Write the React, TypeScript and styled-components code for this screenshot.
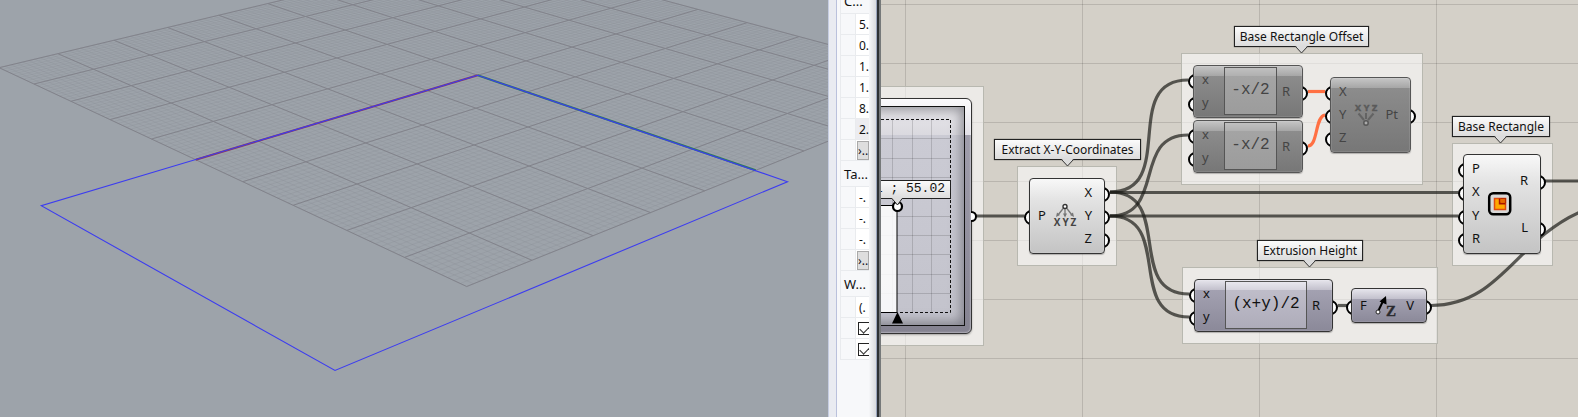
import React from 'react';
import styled, { createGlobalStyle, css } from 'styled-components';

const GlobalStyle = createGlobalStyle`
  * { box-sizing: border-box; }
  html, body { margin: 0; padding: 0; }
  body { font-family: 'Noto Sans', 'Open Sans', sans-serif; color: #111; }
`;

const Workspace = styled.main`
  display: grid;
  grid-template-columns: minmax(0, 828fr) 53px minmax(0, 697fr);
  height: 100vh;
  overflow: hidden;
`;

/* ---------- Perspective viewport ---------- */

const Viewport = styled.section`
  background: #9da3aa;
  min-width: 0;
  overflow: hidden;
`;

const Scene = styled.svg`
  display: block;
  width: 100%;
  height: 100%;
`;

type Pt = [number, number];

const CORNER: Pt = [466.7, 286.5];
const X_END: Pt = [195.7, 159.7];
const ORIGIN: Pt = [477.7, 75.3];
const Y_END: Pt = [755.7, 170.3];

/* Projects ground-plane coordinates (grid cells counted from the near corner). */
const project = (() => {
  const d1 = [X_END[0] - ORIGIN[0], X_END[1] - ORIGIN[1]];
  const d2 = [Y_END[0] - ORIGIN[0], Y_END[1] - ORIGIN[1]];
  const d3 = [
    CORNER[0] - X_END[0] + ORIGIN[0] - Y_END[0],
    CORNER[1] - X_END[1] + ORIGIN[1] - Y_END[1],
  ];
  const den = d1[0] * d2[1] - d2[0] * d1[1];
  const g = (d3[0] * d2[1] - d2[0] * d3[1]) / den;
  const h = (d1[0] * d3[1] - d3[0] * d1[1]) / den;
  return (a: number, b: number): Pt => {
    const u = a / 5;
    const v = b / 5;
    const w = 1 + g * u + h * v;
    return [0, 1].map(
      (i) =>
        (CORNER[i] +
          u * (X_END[i] - CORNER[i] + g * X_END[i]) +
          v * (Y_END[i] - CORNER[i] + h * Y_END[i])) /
        w
    ) as Pt;
  };
})();

const segment = (p: Pt, q: Pt) =>
  `M${p[0].toFixed(1)} ${p[1].toFixed(1)}L${q[0].toFixed(1)} ${q[1].toFixed(1)}`;

const gridPath = (count: number) =>
  Array.from({ length: count + 1 }, (_, i) => {
    const k = (i * 10) / count;
    return segment(project(k, 0), project(k, 10)) + segment(project(0, k), project(10, k));
  }).join('');

const MAJOR = gridPath(10);
const MINOR = gridPath(100);

const GroundPlane = () => (
  <Scene role="img" aria-label="Perspective view">
    <path d={MINOR} stroke="#868b93" strokeOpacity="0.26" strokeWidth="1" fill="none" />
    <path d={MAJOR} stroke="#82838b" strokeWidth="1" fill="none" />
    <path d={segment(ORIGIN, X_END)} stroke="#8d3a5c" strokeWidth="2" />
    <path d={segment(ORIGIN, Y_END)} stroke="#2f7d5c" strokeWidth="2" />
    <path
      d="M477.7 75.3L41.3 205.7L335 370.5L787.5 181.7Z"
      stroke="#3c3cf0"
      strokeWidth="1.100"
      fill="none"
    />
  </Scene>
);

/* ---------- Property panel ---------- */

const Panel = styled.aside`
  display: flex;
  background: #f7f8fa;
  border-left: 1px solid #c6cde2;
  overflow: hidden;
`;

const Splitter = styled.div`
  flex: 0 0 8px;
  background: #e9ebf1;
  border-right: 1px solid #bac1dc;
`;

const PanelBody = styled.div`
  flex: 0 0 32px;
  padding-left: 3px;
  overflow: hidden;
`;

const PanelShadow = styled.div`
  flex: 1;
  background: linear-gradient(90deg, #f6f7f9, #d9dbde);
  border-right: 1px solid #9aa5bd;
`;

const WindowEdge = styled.div`
  flex: 0 0 4px;
  background: #2d3134;
  border-right: 2px solid #76797a;
`;

const PropertyTable = styled.table`
  width: 29px;
  margin-top: -13px;
  table-layout: fixed;
  border-collapse: collapse;
  font-size: 12px;
  line-height: 18px;
`;

const SectionHead = styled.th`
  height: 26px;
  padding: 0 0 0 3px;
  border: 1px solid #e9ebee;
  border-right: 0;
  font-size: 13px;
  font-weight: 400;
  text-align: left;
  white-space: nowrap;
`;

const Gutter = styled.td`
  height: 21px;
  padding: 0;
  border: 1px solid #e9ebee;
`;

const Value = styled.td<{ $shaded?: boolean }>`
  height: 21px;
  padding: 1px 0 0 3px;
  background: ${(p) => (p.$shaded ? '#ececf0' : '#fff')};
  border: 1px solid #e9ebee;
  border-right: 0;
  white-space: nowrap;
`;

const MoreButton = styled.button`
  display: block;
  width: 12px;
  height: 19px;
  margin-left: -2px;
  padding: 0;
  border: 1px solid #a9a9a9;
  background: #dedede;
  font: inherit;
  line-height: 16px;
  color: #112;
  text-align: left;
`;

const Check = styled.input`
  appearance: none;
  display: block;
  width: 13px;
  height: 13px;
  margin: 0 0 0 -1px;
  border: 1px solid #222;
  background: #fff;
  &:checked::after {
    content: '';
    display: block;
    width: 9px;
    height: 5px;
    margin: 2px 0 0 1px;
    border: solid #333;
    border-width: 0 0 1px 1px;
    transform: rotate(-45deg);
  }
`;

type Row = { kind: 'value' | 'shaded' | 'more' | 'check'; text: string };

const v = (text: string): Row => ({ kind: 'value', text });

const SECTIONS: { title: string; rows: Row[] }[] = [
  {
    title: 'C...',
    rows: [
      v('5.'),
      v('0.'),
      v('1.'),
      v('1.'),
      v('8.'),
      { kind: 'shaded', text: '2.' },
      { kind: 'more', text: '›..' },
    ],
  },
  { title: 'Ta...', rows: [v('-.'), v('-.'), v('-.'), { kind: 'more', text: '›..' }] },
  {
    title: 'W...',
    rows: [v('(.'), { kind: 'check', text: 'Show' }, { kind: 'check', text: 'Visible' }],
  },
];

const PropertyRow = ({ row }: { row: Row }) => (
  <tr>
    <Gutter />
    <Value $shaded={row.kind === 'shaded'}>
      {row.kind === 'more' && <MoreButton>{row.text}</MoreButton>}
      {row.kind === 'check' && <Check type="checkbox" defaultChecked aria-label={row.text} />}
      {(row.kind === 'value' || row.kind === 'shaded') && row.text}
    </Value>
  </tr>
);

const GutterCol = styled.col`
  width: 15px;
`;

const Properties = () => (
  <Panel>
    <Splitter />
    <PanelBody>
      <PropertyTable>
        <colgroup>
          <GutterCol />
          <col />
        </colgroup>
        {SECTIONS.map((s) => (
          <tbody key={s.title}>
            <tr>
              <SectionHead colSpan={2}>{s.title}</SectionHead>
            </tr>
            {s.rows.map((r, i) => (
              <PropertyRow key={i} row={r} />
            ))}
          </tbody>
        ))}
      </PropertyTable>
    </PanelBody>
    <PanelShadow />
    <WindowEdge />
  </Panel>
);

/* ---------- Node canvas ---------- */

const Canvas = styled.section`
  position: relative;
  min-width: 0;
  overflow: hidden;
  background: #d4d0c8;
`;

const CanvasLayer = styled.svg`
  position: absolute;
  inset: 0;
  width: 100%;
  height: 100%;
`;

type Box = { $x: number; $y: number; $w: number; $h: number };

const placed = css<Box>`
  position: absolute;
  left: ${(p) => p.$x}px;
  top: ${(p) => p.$y}px;
  width: ${(p) => p.$w}px;
  height: ${(p) => p.$h}px;
`;

const Group = styled.div<Box>`
  ${placed}
  background: rgba(255, 255, 255, 0.56);
  border: 1px solid #b8b8b0;
`;

const Tag = styled.div<{ $x: number; $y: number; $w: number }>`
  position: absolute;
  left: ${(p) => p.$x}px;
  top: ${(p) => p.$y}px;
  width: ${(p) => p.$w}px;
  height: 21px;
  border: 1px solid #222;
  box-shadow: 0 0 1px #444;
  background: linear-gradient(#fbfbfb, #dcdcdc);
  font-size: 12px;
  line-height: 19px;
  text-align: center;
  white-space: nowrap;
`;

const TagPointer = styled.svg`
  position: absolute;
  left: calc(50% - 7px);
  top: 19px;
  width: 13px;
  height: 8px;
`;

type Tone = 'light' | 'muted' | 'violet';

const FACES: Record<Tone, string> = {
  light: 'linear-gradient(#f8f8f8, #e2e2e2 30%, #c4c4c4)',
  muted: 'linear-gradient(#c6c6c6, #a6a6a6 10px, #8c8c8c 10px, #777)',
  violet: 'linear-gradient(#e6e5ec, #c2c0cc 10px, #a3a1b1 10px, #8b8999)',
};

const WELLS: Record<Tone, string> = {
  light: 'none',
  muted: 'linear-gradient(#c0c0c0, #b0b0b0 8px, #a4a4a4 8px, #9c9c9c)',
  violet: 'linear-gradient(#e8e7ee, #d6d4de 8px, #bfbdc9 8px, #aeacba)',
};

const NodeBox = styled.div<Box & { $tone: Tone }>`
  ${placed}
  display: flex;
  isolation: isolate;
  color: ${(p) => (p.$tone === 'muted' ? '#444' : '#111')};
  &::before {
    content: '';
    position: absolute;
    inset: 0;
    z-index: -1;
    border: 1px solid ${(p) => (p.$tone === 'muted' ? '#555' : '#333')};
    border-radius: 4px;
    background: ${(p) => FACES[p.$tone]};
    box-shadow: 0 1px 1px rgba(0, 0, 0, 0.25), inset 0 0 1px #fff;
  }
`;

const PortColumn = styled.div<{ $width: string }>`
  display: flex;
  flex-direction: column;
  flex: 0 0 ${(p) => p.$width};
  padding: 2px 0 4px;
`;

const Port = styled.div<{ $side: 'in' | 'out' }>`
  position: relative;
  flex: 1;
  display: flex;
  align-items: center;
  justify-content: ${(p) => (p.$side === 'in' ? 'flex-start' : 'flex-end')};
  padding: ${(p) => (p.$side === 'in' ? '0 0 0 9px' : '0 13px 0 0')};
  font-size: 13px;
  line-height: 16px;
  &::before {
    content: '';
    position: absolute;
    z-index: -2;
    top: calc(50% - 5px);
    ${(p) => (p.$side === 'in' ? 'left: -5px;' : 'right: -5px;')}
    width: 11px;
    height: 11px;
    border: 2px solid #000;
    border-radius: 50%;
    background: #fff;
  }
`;

const Glyph = styled.div`
  flex: 1;
  display: flex;
  align-items: center;
  justify-content: center;
`;

const Well = styled.div<{ $tone: Tone }>`
  flex: 1;
  display: flex;
  align-items: center;
  justify-content: center;
  margin: 2px 0 3px;
  padding-bottom: 2px;
  border: 1px solid #555;
  background: ${(p) => WELLS[p.$tone]};
  font: 16px/18px 'Liberation Mono', monospace;
`;

type NodeProps = {
  at: [number, number, number, number];
  tone: Tone;
  inputs: string[];
  outputs: string[];
  expression?: string;
  children?: React.ReactNode;
};

const GraphNode = ({ at, tone, inputs, outputs, expression, children }: NodeProps) => (
  <NodeBox $x={at[0]} $y={at[1]} $w={at[2]} $h={at[3]} $tone={tone}>
    <PortColumn $width={expression ? '31px' : 'auto'}>
      {inputs.map((name) => (
        <Port key={name} $side="in">
          {name}
        </Port>
      ))}
    </PortColumn>
    {expression ? <Well $tone={tone}>{expression}</Well> : <Glyph>{children}</Glyph>}
    <PortColumn $width={expression ? '26px' : 'auto'}>
      {outputs.map((name) => (
        <Port key={name} $side="out">
          {name}
        </Port>
      ))}
    </PortColumn>
  </NodeBox>
);

const Label = ({ x, y, w, children }: { x: number; y: number; w: number; children: string }) => (
  <Tag $x={x} $y={y} $w={w}>
    {children}
    <TagPointer viewBox="0 0 13 8">
      <path d="M0.500 0.500L6.500 7L12.500 0.500" fill="#dcdcdc" stroke="#333" />
      <path d="M1.500 0H11.500" stroke="#dcdcdc" strokeWidth="2" />
    </TagPointer>
  </Tag>
);

const DeconstructIcon = () => (
  <svg width="26" height="26" viewBox="0 0 26 26">
    <g stroke="#777" strokeWidth="1.300" fill="none">
      <path d="M11.500 5L6 12M13 6V13M14.500 5L20 12" />
    </g>
    <path d="M4 14L5 9.500L8 12ZM22 14L21 9.500L18 12ZM11 10.500H15L13 14.500Z" fill="#777" />
    <circle cx="13" cy="3.500" r="2" fill="#fff" stroke="#333" strokeWidth="1.400" />
    <g fontFamily="'Open Sans', sans-serif" fontWeight="700" fontSize="10" fill="#444" textAnchor="middle">
      <text x="5" y="22.500">X</text>
      <text x="13.500" y="22.500">Y</text>
      <text x="21.500" y="22.500">Z</text>
    </g>
  </svg>
);

const ConstructIcon = () => (
  <svg width="26" height="26" viewBox="0 0 26 26">
    <g fontFamily="'Open Sans', sans-serif" fontWeight="700" fontSize="9" fill="#5a5a5a" stroke="#5a5a5a" strokeWidth="0.500" textAnchor="middle">
      <text x="5" y="8.500">X</text>
      <text x="13.500" y="8.500">Y</text>
      <text x="21.500" y="8.500">Z</text>
    </g>
    <path d="M5.500 11.500L11 18M13 11V17M20.500 11.500L15 18" stroke="#636363" strokeWidth="2" />
    <circle cx="13" cy="21" r="2.200" fill="#aaa" stroke="#585858" strokeWidth="1.500" />
  </svg>
);

const RectangleIcon = () => (
  <svg width="26" height="26" viewBox="0 0 26 26">
    <rect x="2.200" y="2.200" width="21" height="21" rx="4" fill="#d8d8d8" stroke="#000" strokeWidth="2.500" />
    <rect x="7.500" y="7.500" width="11" height="11" fill="#ffa800" stroke="#e04a10" strokeWidth="1.500" />
    <path d="M12.700 7.500V12.500H18.500" fill="none" stroke="#a81400" strokeWidth="1.800" />
    <path d="M13.500 8H18.500V11.700H13.500Z" fill="#e86a00" />
    <path d="M13.500 7.500H18.500V12" fill="none" stroke="#b82a00" strokeWidth="1.200" />
  </svg>
);

const UnitZIcon = () => (
  <svg width="26" height="26" viewBox="0 0 26 26">
    <path d="M5.500 17.500L10.500 7" stroke="#000" strokeWidth="2" />
    <path d="M13 3L6.500 8.500L13.500 11.500Z" fill="#000" />
    <circle cx="5" cy="19" r="2" fill="#fff" stroke="#222" />
    <text
      x="13"
      y="22.500"
      fontFamily="'Liberation Serif', serif"
      fontWeight="700"
      fontSize="15"
      fill="#2a2a2e"
      stroke="#2a2a2e"
      strokeWidth="0.400"
    >
      Z
    </text>
  </svg>
);

/* Horizontal-tangent spline between an output grip and an input grip. */
const wire = (x1: number, y1: number, x2: number, y2: number) => {
  const d = Math.hypot(x2 - x1, y2 - y1) / 2;
  return `M${x1} ${y1}C${x1 + d} ${y1} ${x2 - d} ${y2} ${x2} ${y2}`;
};

const WIRES = [
  wire(95, 216, 143, 216),
  'M229 192.500H577',
  wire(229, 216, 577, 216),
  wire(229, 192, 307, 80),
  wire(229, 216, 307, 135),
  wire(229, 192, 308, 294),
  wire(229, 216, 308, 317),
  'M457 305.500H466',
  'M664 181H2000',
  'M550 305.500C619 305.500 635 240 699 212L760 190',
];

const ACTIVE_WIRES = ['M427 91.500H444', 'M427 146C437 146 434 116 444 115'];

const SliderFrame = styled.div<Box>`
  ${placed}
  padding: 7px 6px 7px 7px;
  border: 1px solid #333;
  border-radius: 6px;
  background: linear-gradient(#fbfafc, #e2e0e7 36px, #a09eac 36px, #858391);
  box-shadow: 0 1px 2px rgba(0, 0, 0, 0.3), inset 0 0 2px #fff;
`;

const SliderField = styled.div`
  width: 100%;
  height: 100%;
  border: 1px solid #111;
  background: linear-gradient(#e8e7eb, #dad9df 28px, #cbcbd4 28px, #c3c3cc);
  box-shadow: inset 0 0 12px 3px rgba(60, 60, 70, 0.5);
`;

const SliderGrip = styled.div`
  position: absolute;
  right: -6px;
  top: 112px;
  width: 11px;
  height: 11px;
  border: 2px solid #000;
  border-radius: 50%;
  background: #fff;
  clip-path: inset(0 0 0 5px);
`;

const Readout = styled.output<Box>`
  ${placed}
  padding-right: 5px;
  border: 1px solid #222;
  background: linear-gradient(#fafafa, #dedede);
  font: 13px/15px 'Liberation Mono', monospace;
  text-align: right;
  white-space: pre;
`;

const DOMAIN_X = [11, 31, 50];
const DOMAIN_Y = [138, 158, 177, 196, 216, 235, 254, 274, 293];

const DomainSlider = () => (
  <>
    <SliderFrame $x={-149} $y={98} $w={240} $h={236}>
      <SliderField />
      <SliderGrip />
    </SliderFrame>
    <CanvasLayer aria-hidden="true">
      {DOMAIN_X.map((x) => (
        <path key={x} d={`M${x}.5 120V312`} stroke="#000" strokeOpacity="0.14" strokeWidth="1" />
      ))}
      {DOMAIN_Y.map((y) => (
        <path key={y} d={`M0 ${y}.5H70`} stroke="#000" strokeOpacity="0.14" strokeWidth="1" />
      ))}
      <rect x="-20" y="205.500" width="36" height="107" fill="#fff" fillOpacity="0.85" stroke="#000" />
      <path d="M0 119.500H69.500V312.500H17" fill="none" stroke="#111" strokeDasharray="3 2" />
      <path d="M11 323.500L16.500 312L22 323.500Z" fill="#000" />
      <circle cx="16.500" cy="206.500" r="4.500" fill="#fff" stroke="#000" strokeWidth="2.200" />
    </CanvasLayer>
    <Readout $x={-60} $y={180} $w={130} $h={19}>
      1 ; 55.02
    </Readout>
    <CanvasLayer aria-hidden="true">
      <path d="M10.500 198L16.500 205L21.500 198" fill="#dedede" stroke="#222" />
      <path d="M11.500 197.500H21" stroke="#dedede" strokeWidth="2" />
    </CanvasLayer>
  </>
);

const BackgroundGrid = () => (
  <CanvasLayer aria-hidden="true">
    <defs>
      <pattern id="cells" x="24" y="4" width="177" height="59" patternUnits="userSpaceOnUse">
        <path d="M0.500 0V59M0 0.500H177" stroke="#000" strokeOpacity="0.13" fill="none" />
      </pattern>
    </defs>
    <rect width="100%" height="100%" fill="url(#cells)" />
  </CanvasLayer>
);

const NodeCanvas = () => (
  <Canvas>
    <BackgroundGrid />
    <Group $x={-160} $y={86} $w={263} $h={260} />
    <Group $x={136} $y={166} $w={100} $h={100} />
    <Group $x={300} $y={53} $w={242} $h={132} />
    <Group $x={301} $y={267} $w={256} $h={77} />
    <Group $x={571} $y={143} $w={101} $h={123} />
    <CanvasLayer aria-hidden="true">
      {WIRES.map((d) => (
        <path key={d} d={d} fill="none" stroke="#1c1c18" strokeOpacity="0.7" strokeWidth="3.200" />
      ))}
      {ACTIVE_WIRES.map((d) => (
        <path key={d} d={d} fill="none" stroke="#ff7043" strokeWidth="3.200" />
      ))}
    </CanvasLayer>
    <DomainSlider />
    <GraphNode at={[148, 178, 76, 76]} tone="light" inputs={['P']} outputs={['X', 'Y', 'Z']}>
      <DeconstructIcon />
    </GraphNode>
    <GraphNode at={[312, 65, 110, 53]} tone="muted" inputs={['x', 'y']} outputs={['R']} expression="-x/2" />
    <GraphNode at={[312, 120, 110, 53]} tone="muted" inputs={['x', 'y']} outputs={['R']} expression="-x/2" />
    <GraphNode at={[449, 77, 81, 76]} tone="muted" inputs={['X', 'Y', 'Z']} outputs={['Pt']}>
      <ConstructIcon />
    </GraphNode>
    <GraphNode at={[313, 279, 139, 53]} tone="violet" inputs={['x', 'y']} outputs={['R']} expression="(x+y)/2" />
    <GraphNode at={[470, 288, 76, 35]} tone="violet" inputs={['F']} outputs={['V']}>
      <UnitZIcon />
    </GraphNode>
    <GraphNode at={[582, 154, 78, 100]} tone="light" inputs={['P', 'X', 'Y', 'R']} outputs={['R', 'L']}>
      <RectangleIcon />
    </GraphNode>
    <Label x={113} y={139} w={147}>Extract X-Y-Coordinates</Label>
    <Label x={353} y={26} w={135}>Base Rectangle Offset</Label>
    <Label x={376} y={240} w={106}>Extrusion Height</Label>
    <Label x={571} y={116} w={98}>Base Rectangle</Label>
  </Canvas>
);

export default function App() {
  return (
    <>
      <GlobalStyle />
      <Workspace>
        <Viewport>
          <GroundPlane />
        </Viewport>
        <Properties />
        <NodeCanvas />
      </Workspace>
    </>
  );
}
